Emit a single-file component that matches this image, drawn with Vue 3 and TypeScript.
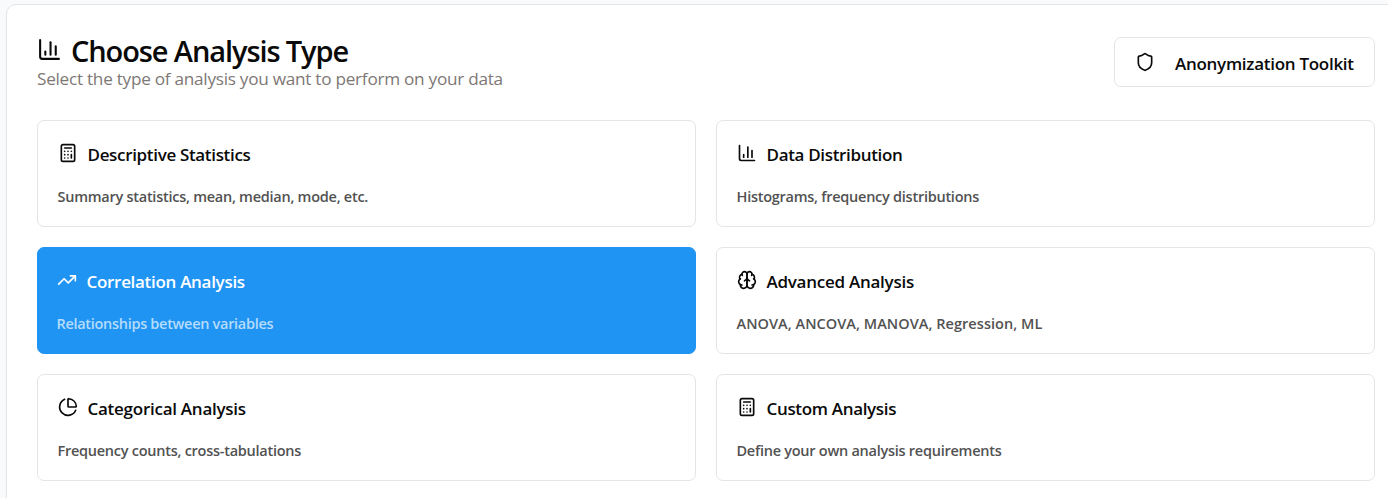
<script setup lang="ts">
interface AnalysisType {
  id: string
  title: string
  description: string
  icon: string
}

const selected = 'correlation'

const icons: Record<string, string[]> = {
  chart: ['M3 3v16a2 2 0 0 0 2 2h16', 'M18 17V9', 'M13 17V5', 'M8 17v-3'],
  calculator: [
    'M6 2h12a2 2 0 0 1 2 2v16a2 2 0 0 1-2 2H6a2 2 0 0 1-2-2V4a2 2 0 0 1 2-2z',
    'M8 6h8', 'M16 14v4', 'M16 10h.01', 'M12 10h.01', 'M8 10h.01',
    'M12 14h.01', 'M8 14h.01', 'M12 18h.01', 'M8 18h.01',
  ],
  trend: ['M22 7l-8.5 8.5-5-5L2 17', 'M16 7h6v6'],
  brain: [
    'M12 5a3 3 0 1 0-5.997.125 4 4 0 0 0-2.526 5.77 4 4 0 0 0 .556 6.588A4 4 0 1 0 12 18Z',
    'M12 5a3 3 0 1 1 5.997.125 4 4 0 0 1 2.526 5.77 4 4 0 0 1-.556 6.588A4 4 0 1 1 12 18Z',
    'M15 13a4.5 4.5 0 0 1-3-4 4.5 4.5 0 0 1-3 4',
    'M17.599 6.5a3 3 0 0 0 .399-1.375', 'M6.003 5.125A3 3 0 0 0 6.401 6.5',
    'M3.477 10.896a4 4 0 0 1 .585-.396', 'M19.938 10.5a4 4 0 0 1 .585.396',
    'M6 18a4 4 0 0 1-1.967-.516', 'M19.967 17.484A4 4 0 0 1 18 18',
  ],
  pie: [
    'M21 12c.552 0 1.005-.449.95-.998a10 10 0 0 0-8.953-8.951c-.55-.055-.998.398-.998.95v8a1 1 0 0 0 1 1z',
    'M21.21 15.89A10 10 0 1 1 8 2.83',
  ],
}

const types: AnalysisType[] = [
  { id: 'descriptive', title: 'Descriptive Statistics', description: 'Summary statistics, mean, median, mode, etc.', icon: 'calculator' },
  { id: 'distribution', title: 'Data Distribution', description: 'Histograms, frequency distributions', icon: 'chart' },
  { id: 'correlation', title: 'Correlation Analysis', description: 'Relationships between variables', icon: 'trend' },
  { id: 'advanced', title: 'Advanced Analysis', description: 'ANOVA, ANCOVA, MANOVA, Regression, ML', icon: 'brain' },
  { id: 'categorical', title: 'Categorical Analysis', description: 'Frequency counts, cross-tabulations', icon: 'pie' },
  { id: 'custom', title: 'Custom Analysis', description: 'Define your own analysis requirements', icon: 'calculator' },
]
</script>

<template>
  <main class="page">
    <section class="panel">
      <header class="header">
        <div>
          <h1 class="heading">
            <svg class="icon icon-lg" viewBox="0 0 24 24"><path v-for="d in icons.chart" :key="d" :d="d" /></svg>
            <span class="heading-text">Choose Analysis Type</span>
          </h1>
          <p class="subtitle">Select the type of analysis you want to perform on your data</p>
        </div>
        <button class="toolkit" type="button">
          <svg class="icon" viewBox="0 0 24 24">
            <path d="M20 13c0 5-3.5 7.5-7.66 8.95a1 1 0 0 1-.67-.01C7.5 20.5 4 18 4 13V6a1 1 0 0 1 1-1c2 0 4.5-1.2 6.24-2.72a1.17 1.17 0 0 1 1.52 0C14.51 3.81 17 5 19 5a1 1 0 0 1 1 1z" />
          </svg>
          <span class="toolkit-label">Anonymization Toolkit</span>
        </button>
      </header>
      <div class="grid">
        <button v-for="t in types" :key="t.id" type="button" :class="['card', t.id, { active: t.id === selected }]">
          <span class="card-head">
            <svg class="icon" viewBox="0 0 24 24"><path v-for="d in icons[t.icon]" :key="d" :d="d" /></svg>
            <span class="card-title">{{ t.title }}</span>
          </span>
          <span class="card-desc">{{ t.description }}</span>
        </button>
      </div>
    </section>
  </main>
</template>

<style>
body {
  background: #f9fafb;
  overflow: hidden;
}
</style>

<style scoped>
.page {
  box-sizing: border-box;
  height: 498px;
  padding: 4px 0 0 6px;
  overflow: hidden;
  background: #f9fafb;
  font-family: "Segoe UI", "Open Sans", "Noto Sans", sans-serif;
  color: #0a0a0a;
}
.panel {
  box-sizing: border-box;
  width: 1400px;
  height: 520px;
  padding: 32px 30px 0;
  border: 1px solid #e5e5e5;
  border-radius: 10px;
  background: #fff;
  box-shadow: 0 1px 2px rgba(0, 0, 0, 0.05);
}
.header {
  display: flex;
  justify-content: space-between;
  width: 1338px;
  height: 83px;
}
.heading {
  display: flex;
  align-items: center;
  gap: 9px;
  height: 30px;
  margin: 0;
  font-size: 29px;
  font-weight: 600;
  line-height: 30px;
  letter-spacing: -1.1px;
  white-space: nowrap;
}
.heading-text {
  margin-bottom: 2px;
}
.subtitle {
  margin: 0;
  font-size: 17.2px;
  font-weight: 400;
  line-height: 23px;
  letter-spacing: -0.27px;
  color: #7d7875;
  white-space: nowrap;
}
.icon {
  flex: none;
  width: 20px;
  height: 20px;
  fill: none;
  stroke: currentColor;
  stroke-width: 2;
  stroke-linecap: round;
  stroke-linejoin: round;
}
.icon-lg {
  width: 25px;
  height: 25px;
  margin-bottom: 5px;
}
.toolkit {
  box-sizing: border-box;
  display: flex;
  align-items: center;
  gap: 20px;
  width: 261px;
  height: 50px;
  padding: 0 20px;
  border: 1px solid #e5e5e5;
  border-radius: 7px;
  background: #fff;
  color: inherit;
  font: 600 17px/24px "Segoe UI", "Open Sans", "Noto Sans", sans-serif;
  letter-spacing: -0.28px;
  white-space: nowrap;
}
.toolkit-label {
  padding-top: 3px;
}
.grid {
  display: grid;
  grid-template-columns: 659px 659px;
  grid-auto-rows: 107px;
  gap: 20px;
}
.card {
  display: flex;
  flex-direction: column;
  align-items: flex-start;
  box-sizing: border-box;
  padding: 20px 19.5px 0;
  border: 1px solid #e5e5e5;
  border-radius: 7px;
  background: #fff;
  color: inherit;
  font-family: inherit;
  text-align: left;
}
.card-head {
  display: flex;
  align-items: center;
  gap: 10px;
  height: 24px;
}
.card-head .icon {
  margin-bottom: 1px;
}
.card-title {
  padding-top: 3px;
  font-size: 17px;
  font-weight: 600;
  line-height: 24px;
  letter-spacing: -0.33px;
}
.advanced .card-title,
.categorical .card-title {
  letter-spacing: -0.26px;
}
.card-desc {
  margin-top: 22px;
  font-size: 14.5px;
  font-weight: 600;
  line-height: 20px;
  letter-spacing: -0.26px;
  color: #525252;
}
.advanced .card-desc {
  letter-spacing: 0.05px;
}
.active {
  padding-left: 18.5px;
  border-color: #2094f3;
  background: #2094f3;
  color: #fff;
}
.active .card-title {
  letter-spacing: -0.3px;
}
.active .card-desc {
  letter-spacing: -0.3px;
  color: #b5dcfb;
}
</style>
